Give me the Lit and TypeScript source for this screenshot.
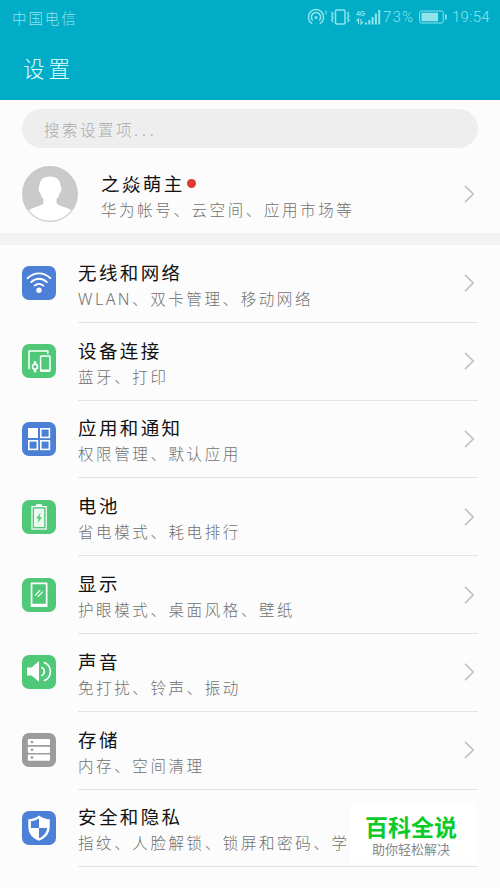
import { LitElement, html, svg, css } from "lit";
import { customElement, property } from "lit/decorators.js";

const icons: Record<string, unknown> = {
  wifi: svg`<g fill="none" stroke="#fff" stroke-width="1.9" stroke-linecap="round">
      <path d="M5.6 12.2C12.2 5.7 21.8 5.7 28.4 12.2"/><path d="M9.2 16.1C13.7 11.7 20.3 11.7 24.8 16.1"/><path d="M12.6 19.6C15.2 17.3 18.8 17.3 21.4 19.6"/></g>
      <circle cx="17" cy="24.2" r="2.7" fill="#fff"/>`,
  devices: svg`<g fill="none" stroke="#fff">
      <path stroke-width="1.5" d="M7 25.200V7H25.800V10"/><rect x="18.600" y="12" width="9.400" height="15" rx=".8" stroke-width="1.500"/><path stroke-width="2.200" d="M18.600 26.600H28"/>
      <circle cx="13" cy="22.800" r="2.500" stroke-width="1.500"/><path stroke-width="2.600" d="M13 17.200V20.200M13 25.400V28.200"/></g>`,
  apps: svg`<rect x="6" y="6" width="10" height="10" fill="#fff"/><g fill="none" stroke="#fff" stroke-width="1.6">
      <rect x="18.8" y="6.8" width="8.6" height="8.6"/><rect x="6.8" y="18.8" width="8.6" height="8.6"/><rect x="18.8" y="18.8" width="8.6" height="8.6"/></g>`,
  battery: svg`<path fill="#fff" d="M14 4.2h6v2h-6z"/><rect x="10" y="6.6" width="14.200" height="22.400" fill="none" stroke="#fff" stroke-width="1.200"/>
      <rect x="12" y="8.6" width="10.200" height="18.400" fill="#fff" fill-opacity=".88"/><path fill="#4fc878" d="M18.400 12.800l-4.100 5.600h2.400l-.9 4.600 4.200-5.800h-2.500z"/>`,
  display: svg`<path fill="#fff" fill-rule="evenodd" d="M9.3 4.600h15.600q.6 0 .6.6v23.200q0 .6-.6.6H9.300q-.6 0-.6-.6V5.200q0-.6.6-.6zM10.400 6.300v19.400h13.400V6.300z"/>
      <path stroke="#fff" stroke-width="1.200" d="M13 17.600l5.200-5.400M15.800 18.800l5-5.200"/>`,
  sound: svg`<path fill="#fff" d="M5 12.400h4.600L17 6v20.800l-7.400-6.200H5z"/><g fill="none" stroke="#fff" stroke-width="1.600">
      <path d="M19.300 12.200C21.200 13 22.300 14.600 22.300 16.500S21.200 20 19.300 20.800"/><path d="M21.800 7.200C25.900 8.800 28.400 12.300 28.400 16.500S25.900 24.200 21.800 25.800"/></g>`,
  storage: svg`<g fill="#fff"><rect x="5.800" y="6" width="22.200" height="6.100" rx=".8"/><rect x="5.800" y="13.800" width="22.200" height="6.100" rx=".8"/><rect x="5.800" y="21.600" width="22.200" height="6.100" rx=".8"/></g>
      <g fill="#9c9c9c"><circle cx="10" cy="9" r="1.300"/><circle cx="10" cy="16.800" r="1.300"/><circle cx="10" cy="24.600" r="1.300"/></g>`,
  shield: svg`<path fill="#fff" d="M17 4.400C20.500 7 24 8 27.700 8.200V16C27.700 22.400 23.500 27.400 17 29.800 10.500 27.400 6.300 22.400 6.300 16V8.200C10 8 13.500 7 17 4.400z"/>
      <path fill="#4c7fd6" d="M17 7.400V17H8.900V10.200C11.800 9.900 14.400 9 17 7.400z"/><path fill="#4c7fd6" d="M17 17h8.100C24.700 21.600 21.700 25.300 17 27.200z"/>`,
};

const rows = [
  { icon: "wifi", tone: "blue", title: "无线和网络", latin: "WLAN", note: "、双卡管理、移动网络" },
  { icon: "devices", tone: "green", title: "设备连接", note: "蓝牙、打印" },
  { icon: "apps", tone: "blue", title: "应用和通知", note: "权限管理、默认应用" },
  { icon: "battery", tone: "green", title: "电池", note: "省电模式、耗电排行" },
  { icon: "display", tone: "green", title: "显示", note: "护眼模式、桌面风格、壁纸" },
  { icon: "sound", tone: "green", title: "声音", note: "免打扰、铃声、振动" },
  { icon: "storage", tone: "grey", title: "存储", note: "内存、空间清理" },
  { icon: "shield", tone: "blue", title: "安全和隐私", note: "指纹、人脸解锁、锁屏和密码、学" },
];

const textStyles = css`
  .title { font-size: 18.5px; line-height: 26px; letter-spacing: 2.4px; color: #111; white-space: nowrap; }
  .note { font-size: 15.5px; line-height: 26px; letter-spacing: 2.6px; font-weight: 300; color: #707070; white-space: nowrap; }
  .chevron { flex: none; width: 12px; height: 20px; fill: none; stroke: #c2c2c2; stroke-width: 1.7; }
`;
const chevron = html`<svg class="chevron" viewBox="0 0 12 20"><path d="M1 1.800L9.200 10L1 18.200"/></svg>`;

@customElement("setting-row")
class SettingRow extends LitElement {
  @property() icon = "";
  @property() tone = "";
  @property() heading = "";
  @property() latin = "";
  @property() note = "";
  static styles = [textStyles, css`
    :host { display: flex; height: 77.8px; padding: 0 22px; align-items: center; box-sizing: border-box; }
    .tile { flex: none; width: 34px; height: 34px; border-radius: 7px; margin: -1px 22px 0 0; }
    .tile svg { display: block; width: 34px; height: 34px; }
    .blue { background: #4c7fd6; }
    .green { background: #4fc878; }
    .grey { background: #9c9c9c; }
    .body { flex: 1; min-width: 0; height: 100%; box-sizing: border-box; border-bottom: 1px solid #e4e4e4; display: flex; align-items: center; padding-right: 2px; }
    .words { flex: 1; min-width: 0; padding-top: 3px; }
    .latin { letter-spacing: 2.5px; font-size: 16px; font-family: "Noto Sans", sans-serif; line-height: 1; }
  `];
  render() {
    return html`<div class="tile ${this.tone}"><svg viewBox="0 0 34 34">${icons[this.icon]}</svg></div>
      <div class="body"><div class="words"><div class="title">${this.heading}</div>
      <div class="note">${this.latin ? html`<span class="latin">${this.latin}</span>` : ""}${this.note}</div></div>${chevron}</div>`;
  }
}

@customElement("app-root")
class AppRoot extends LitElement {
  static styles = [textStyles, css`
    :host { display: block; position: relative; width: 500px; height: 888px; overflow: hidden; background: #fcfcfc; font-family: "Noto Sans CJK SC", sans-serif; }
    header { height: 100px; background: #00acc6; box-sizing: border-box; }
    .status { height: 34px; display: flex; align-items: center; padding: 0 10px 0 12px; color: #91e3ec; }
    .carrier { font-size: 14.5px; letter-spacing: 1.9px; font-weight: 300; flex: 1; }
    .signals { width: 76px; height: 20px; }
    .num { font: 300 15px/20px Roboto, sans-serif; }
    .percent { width: 36px; letter-spacing: 1.2px; }
    .cell { width: 28px; height: 16px; margin-right: 5px; }
    .clock { width: 38px; letter-spacing: .3px; }
    h1 { margin: 0; padding-left: 23px; height: 66px; line-height: 68px; font-size: 21.5px; letter-spacing: 4px; font-weight: 300; color: #e2ffff; }
    .search { margin: 9px 22px 0; height: 39px; border-radius: 20px; background: #eee; box-sizing: border-box; padding-left: 22px; font-size: 15.5px; line-height: 40px; letter-spacing: 2.500px; font-weight: 300; color: #aaa; }
    .dots { letter-spacing: 4px; }
    .account { height: 85px; box-sizing: border-box; display: flex; align-items: center; padding: 7px 24px 0 22px; }
    .avatar { width: 56px; height: 56px; margin-right: 23px; }
    .who { flex: 1; padding-top: 4px; }
    .name { display: flex; align-items: center; }
    .dot { width: 9px; height: 9px; border-radius: 50%; background: #dc3c30; margin-left: 2px; }
    .gap { height: 12px; background: #f3f3f3; }
    .mark { position: absolute; left: 350px; top: 803px; width: 126px; height: 60px; background: #fff; text-align: center; }
    .brand { padding: 10px 4px 0 0; font-size: 23px; line-height: 27px; font-weight: 700; color: #0ccb29; }
    .slogan { padding-right: 4px; font-size: 13px; line-height: 17px; color: #888; }
  `];
  render() {
    return html`<header>
        <div class="status"><span class="carrier">中国电信</span>
          <svg class="signals" viewBox="0 0 76 20" fill="none" stroke="#91e3ec">
            <path stroke-width="1.5" d="M5.300 16.800A7.600 7.600 0 1 1 12.700 16.800M5.800 13.400A4.600 4.600 0 1 1 12.200 13.400"/>
            <circle cx="9" cy="10.500" r="1.600" fill="#91e3ec" stroke="none"/><path d="M19 3.500v4"/>
            <rect x="28.500" y="3" width="9.500" height="14" rx="1" stroke-width="1.500"/>
            <path stroke-width="1.300" d="M24.500 5l1.600 2-1.600 2 1.600 2-1.600 2 1.600 2M42 5l-1.600 2 1.600 2-1.600 2 1.600 2-1.600 2"/>
            <text x="49" y="9" font-family="Liberation Sans" font-size="8" font-weight="700" fill="#91e3ec" stroke="none" textLength="9" lengthAdjust="spacingAndGlyphs">4G</text>
            <path stroke-width="1.200" d="M51.500 17v-5l-2 2M54 12v5l2-2"/>
            <path stroke-width="2" d="M59 17.500v-2M62.300 17.500v-4.500M65.600 17.500v-7.500M68.900 17.500v-11M72.200 17.500V3"/>
          </svg>
          <span class="num percent">73%</span>
          <svg class="cell" viewBox="0 0 28 16"><rect x=".7" y="2" width="23.500" height="12" rx="1.500" fill="none" stroke="#91e3ec" stroke-width="1"/><path fill="#91e3ec" d="M2.500 3.800h16.500v8.400H2.500zM26 5.500h1.700v5H26z"/></svg>
          <span class="num clock">19:54</span></div>
        <h1>设置</h1>
      </header>
      <div class="search">搜索设置项<span class="dots">...</span></div>
      <section class="account">
        <svg class="avatar" viewBox="0 0 56 56"><circle cx="28" cy="28" r="27.600" fill="#cacaca"/>
          <path fill="#fff" d="M28 10.500c7 0 10.700 4.100 10.700 10.300 1.300.9.900 5.100-.9 6-.6 3-1.800 5-3.300 6.500v3.600c2.100 3.500 11.300 3.800 15.500 8A27 27 0 0 1 6 44.900c4.200-4.200 13.400-4.500 15.500-8v-3.600c-1.500-1.500-2.700-3.500-3.300-6.500-1.800-.9-2.200-5.100-.9-6C17.300 14.600 21 10.500 28 10.500z"/><circle cx="28" cy="28" r="27.300" fill="none" stroke="#cacaca" stroke-width="1.200"/></svg>
        <div class="who"><div class="name"><span class="title">之焱萌主</span><i class="dot"></i></div><div class="note">华为帐号、云空间、应用市场等</div></div>${chevron}
      </section>
      <div class="gap"></div>
      ${rows.map(r => html`<setting-row .icon=${r.icon} .tone=${r.tone} .heading=${r.title} .latin=${r.latin ?? ""} .note=${r.note}></setting-row>`)}
      <aside class="mark"><div class="brand">百科全说</div><div class="slogan">助你轻松解决</div></aside>`;
  }
}
